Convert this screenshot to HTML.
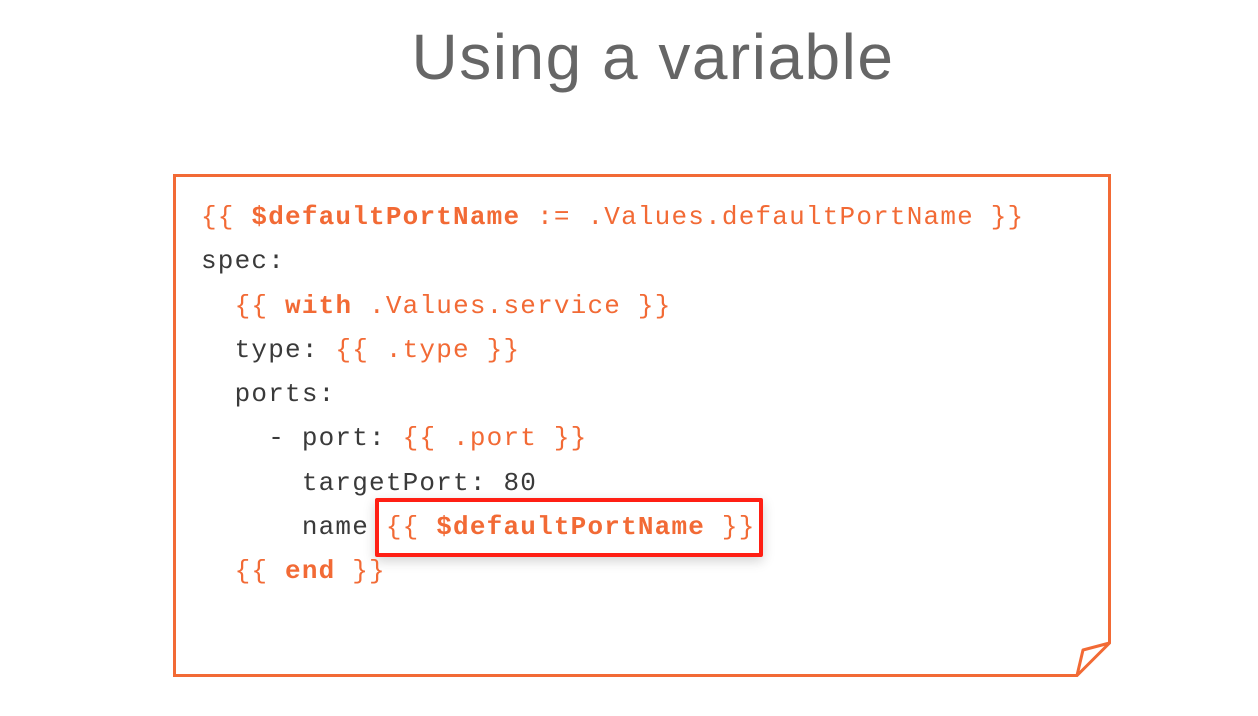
<!DOCTYPE html>
<html><head><meta charset="utf-8"><style>
html,body{margin:0;padding:0;background:#fff;}
body{width:1258px;height:716px;position:relative;overflow:hidden;}
.title{position:absolute;left:0;width:1306px;top:20px;text-align:center;font-family:"Liberation Sans",sans-serif;font-size:64px;color:#666;font-weight:normal;letter-spacing:1.5px;}
svg.box{position:absolute;left:0;top:0;}
.code{position:absolute;left:201px;top:195px;font-family:"Liberation Mono",monospace;font-size:26px;letter-spacing:1.2px;line-height:44.3px;color:#3a3a3a;white-space:pre;}
.o{color:#f26a35;}
.b{font-weight:bold;}
.hl{position:absolute;left:375px;top:498px;width:380px;height:51px;border:4px solid #ff1f14;border-radius:2px;box-shadow:0 4px 12px rgba(0,0,0,0.18);}
</style></head><body>
<div class="title">Using a variable</div>
<svg class="box" width="1258" height="716">
<path d="M174.5 175.5 H1109.5 V643 L1077 675.5 H174.5 Z" fill="none" stroke="#f26a35" stroke-width="3"/>
<path d="M1077 675.5 L1083 650 L1109.5 643" fill="none" stroke="#f26a35" stroke-width="3" stroke-linejoin="round"/>
</svg>
<div class="hl"></div>
<div class="code"><span class="o">{{ <span class="b">$defaultPortName</span> := .Values.defaultPortName }}</span>
spec:
  <span class="o">{{ <span class="b">with</span> .Values.service }}</span>
  type: <span class="o">{{ .type }}</span>
  ports:
    - port: <span class="o">{{ .port }}</span>
      targetPort: 80
      name <span class="o">{{ <span class="b">$defaultPortName</span> }}</span>
  <span class="o">{{ <span class="b">end</span> }}</span></div>
</body></html>
